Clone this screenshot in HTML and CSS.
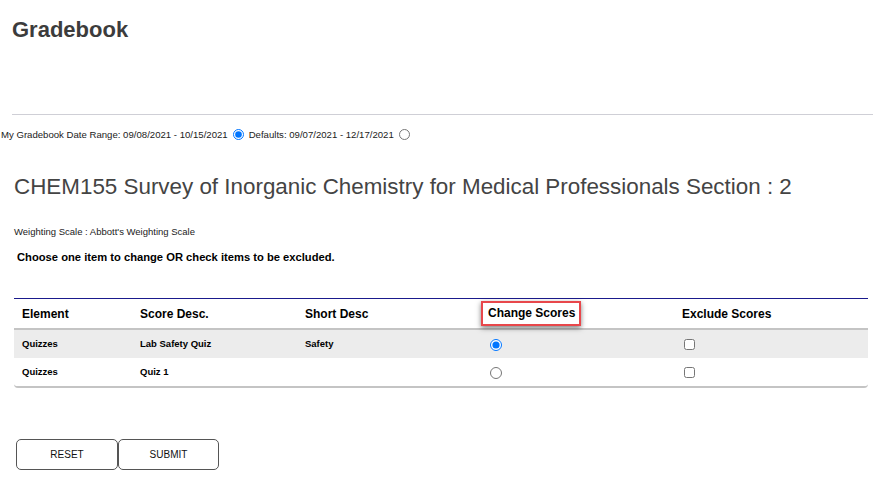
FILE: index.html
```html
<!DOCTYPE html>
<html>
<head>
<meta charset="utf-8">
<link rel="stylesheet" href="styles.css">
</head>
<body>
<h1 class="page-title">Gradebook</h1>
<div class="divider"></div>
<div class="range">
  <span>My Gradebook Date Range: 09/08/2021 - 10/15/2021</span>
  <input type="radio" name="range" class="range-radio" checked>
  <span>Defaults: 09/07/2021 - 12/17/2021</span>
  <input type="radio" name="range" class="range-radio">
</div>
<h2 class="course">CHEM155 Survey of Inorganic Chemistry for Medical Professionals Section : 2</h2>
<div class="scale">Weighting Scale : Abbott's Weighting Scale</div>
<div class="instr">Choose one item to change OR check items to be excluded.</div>
<div class="grid">
  <div class="row head">
    <div class="cell">Element</div>
    <div class="cell">Score Desc.</div>
    <div class="cell">Short Desc</div>
    <div class="cell"><span class="highlight">Change Scores</span></div>
    <div class="cell">Exclude Scores</div>
  </div>
  <div class="row body alt">
    <div class="cell">Quizzes</div>
    <div class="cell">Lab Safety Quiz</div>
    <div class="cell">Safety</div>
    <div class="cell"><input type="radio" name="chg" class="chg" checked></div>
    <div class="cell"><input type="checkbox" class="exc"></div>
  </div>
  <div class="row body">
    <div class="cell">Quizzes</div>
    <div class="cell">Quiz 1</div>
    <div class="cell"></div>
    <div class="cell"><input type="radio" name="chg" class="chg"></div>
    <div class="cell"><input type="checkbox" class="exc"></div>
  </div>
</div>
<div class="actions">
  <button class="btn">RESET</button><button class="btn">SUBMIT</button>
</div>
</body>
</html>
```

FILE: styles.css
```css
html, body {
  margin: 0;
  padding: 0;
  background: #fff;
  font-family: "Liberation Sans", Arial, sans-serif;
  color: #000;
}
.page-title {
  margin: 0;
  padding: 17px 0 0 12px;
  height: 96px;
  box-sizing: border-box;
  font-size: 22px;
  font-weight: bold;
  color: #3c3c3c;
  line-height: 25px;
}
.divider {
  margin: 18px 11px 0 12px;
  border-top: 1px solid #cfcfd6;
}
.range {
  display: flex;
  align-items: center;
  height: 26px;
  margin-top: 6px;
  padding-left: 1px;
  font-size: 9.6px;
  color: #222;
}
.range-radio {
  margin: 0 5px 0 5px;
  width: 11px;
  height: 11px;
}
.course {
  margin: 27px 0 0 14px;
  font-size: 22.4px;
  font-weight: normal;
  color: #444;
  line-height: 26px;
}
.scale {
  margin-top: 25px;
  margin-left: 14px;
  font-size: 9.5px;
  line-height: 14px;
  color: #222;
}
.instr {
  margin-top: 11px;
  margin-left: 17px;
  font-size: 11.2px;
  font-weight: bold;
  line-height: 14px;
}
.grid {
  margin: 34px 16px 0 14px;
  border-top: 1px solid #1a1a8c;
  border-bottom: 2px solid #c4c4c4;
  border-radius: 0 0 4px 4px;
}
.row {
  display: grid;
  grid-template-columns: 118px 165px 183px 194px 1fr;
  align-items: center;
}
.head {
  height: 29px;
  border-bottom: 2px solid #c4c4c4;
  font-size: 12px;
  font-weight: bold;
}
.body {
  height: 28px;
  font-size: 9.5px;
  font-weight: bold;
}
.body .cell {
  padding-bottom: 2px;
}
.alt {
  background: #ececec;
}
.cell {
  padding-left: 8px;
  display: flex;
  align-items: center;
}
.highlight {
  display: inline-block;
  margin: 0 0 0 -7px;
  padding: 3px 4px 4px 5px;
  border: 2px solid #e8474b;
  box-shadow: 0 2px 5px rgba(0, 0, 0, 0.5);
}
.chg {
  margin: 4px 0 0 2px;
  width: 12px;
  height: 12px;
}
.exc {
  margin: 2px 0 0 2px;
  width: 11px;
  height: 11px;
}
.actions {
  margin: 51px 0 0 16px;
  display: flex;
}
.btn {
  width: 102px;
  height: 31px;
  background: #fff;
  border: 1px solid #555;
  border-radius: 5px;
  font-family: "Liberation Sans", Arial, sans-serif;
  font-size: 10px;
  color: #111;
  padding: 0;
}
.btn + .btn {
  margin-left: 0;
  width: 101px;
}
```
